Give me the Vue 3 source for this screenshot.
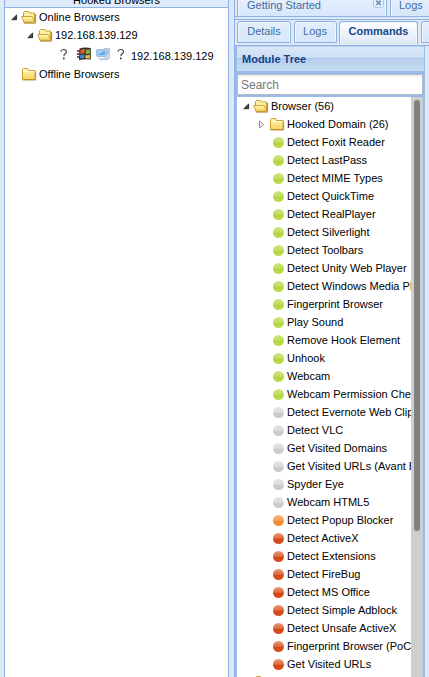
<script setup>
const modules = [
  ['green', ['Detect Foxit Reader', 'Detect LastPass', 'Detect MIME Types', 'Detect QuickTime', 'Detect RealPlayer', 'Detect Silverlight', 'Detect Toolbars', 'Detect Unity Web Player', 'Detect Windows Media Player', 'Fingerprint Browser', 'Play Sound', 'Remove Hook Element', 'Unhook', 'Webcam', 'Webcam Permission Check']],
  ['grey', ['Detect Evernote Web Clipper', 'Detect VLC', 'Get Visited Domains', 'Get Visited URLs (Avant Browser)', 'Spyder Eye', 'Webcam HTML5']],
  ['orange', ['Detect Popup Blocker']],
  ['red', ['Detect ActiveX', 'Detect Extensions', 'Detect FireBug', 'Detect MS Office', 'Detect Simple Adblock', 'Detect Unsafe ActiveX', 'Fingerprint Browser (PoC)', 'Get Visited URLs']],
].flatMap(([color, names]) => names.map((name) => ({ color, name })))
</script>

<template>
  <svg class="defs" width="0" height="0">
    <defs>
      <linearGradient id="gold" x1="0" y1="0" x2="0" y2="1">
        <stop offset="0" stop-color="#fffab8" />
        <stop offset="1" stop-color="#f5d25c" />
      </linearGradient>
      <symbol id="open" viewBox="0 0 16 14">
        <path d="M2.5 12V2.5L3.5 1.5H7.5L8.5 3H13.5V12Z" fill="#fdf0a0" stroke="#c9a234" />
        <path d="M14.6 4V12.5" fill="none" stroke="#a87a1c" stroke-width=".9" />
        <path d="M.8 6.5H11.3L13.8 12.3H3Z" fill="url(#gold)" stroke="#c99c30" stroke-width=".9" />
        <path d="M3 13.2H14.8" fill="none" stroke="#a87a1c" stroke-width=".8" />
      </symbol>
      <symbol id="closed" viewBox="0 0 16 14">
        <path d="M1.5 12.5V2.5L2.5 1.5H6.5L7.5 3.5H14V12.5Z" fill="url(#gold)" stroke="#c99f30" />
        <path d="M2.5 4.5H13.3" stroke="#fffbd5" />
        <path d="M2 13H14.7V4.5" fill="none" stroke="#ad8025" stroke-width=".8" />
      </symbol>
      <symbol id="expanded" viewBox="0 0 7 7">
        <path d="M.8 5.7L5.6 1V5.7Z" fill="#444" stroke="#222" stroke-width=".9" />
      </symbol>
      <symbol id="question" viewBox="0 0 9 14">
        <path d="M1.3 4V3Q1.7 1.3 4.2 1.3Q7.3 1.3 7.3 4Q7.3 5.3 5.5 6.5Q4.4 7.3 4.4 9" fill="none" stroke="#444" stroke-width="1.25" />
        <circle cx="4.3" cy="11.5" r="1" fill="#333" />
      </symbol>
    </defs>
  </svg>
  <div class="page">
    <section class="hooked">
      <header class="hooked-head"><span>Hooked Browsers</span></header>
      <div class="row online"><svg class="arrow"><use href="#expanded" /></svg><svg class="folder"><use href="#open" /></svg><span>Online Browsers</span></div>
      <div class="row host"><svg class="arrow"><use href="#expanded" /></svg><svg class="folder"><use href="#open" /></svg><span>192.168.139.129</span></div>
      <div class="row client">
        <svg class="question"><use href="#question" /></svg>
        <svg class="windows" viewBox="0 0 14 14">
          <path d="M0 3H3V5H0ZM0 6H3V8H0ZM0 9H3V11H0Z" fill="#8a5a4c" />
          <path d="M2.5 1.5Q7 -.2 13.8 1V12.6Q8 11.6 2 13.2Z" fill="#33302c" />
          <path d="M3.6 2.7Q6 1.6 8 2.2L7.5 6.5Q5.5 6 3.3 7Z" fill="#e65b29" />
          <path d="M9 2.4Q11 2.8 12.9 2.2V6.6Q10.5 7.3 8.6 6.7Z" fill="#78b43c" />
          <path d="M3.2 8Q5.5 7 7.5 7.6L7 11.2Q5.2 10.8 3 11.8Z" fill="#408bd0" />
          <path d="M8.6 7.9Q10.6 8.4 12.8 7.8V11.4Q10 11.8 8.2 11.1Z" fill="#f1c43b" />
        </svg>
        <svg class="computer" viewBox="0 0 14 14">
          <path d="M8.5 1.5H13.5V11.5H9Z" fill="#d4e0e9" stroke="#b3c6d6" />
          <path d="M10 4H13M10 6H13" stroke="#8fabc2" />
          <rect x=".5" y="2.5" width="10" height="7" rx="1" fill="#a9cdf0" stroke="#9dbbda" />
          <path d="M2 4H9V8H2Z" fill="#68aaec" />
          <path d="M2 4H8L3 7H2Z" fill="#a4d0fa" />
          <path d="M2.5 11.5H10L12 13H4Z" fill="#cedce8" stroke="#b0c2d1" stroke-width=".7" />
        </svg>
        <svg class="question second"><use href="#question" /></svg>
        <span>192.168.139.129</span>
      </div>
      <div class="row offline"><svg class="folder"><use href="#closed" /></svg><span>Offline Browsers</span></div>
    </section>

    <section class="main">
      <nav class="outer-tabs">
        <div class="tab started"><span>Getting Started</span><svg class="close" viewBox="0 0 11 11"><rect x=".5" y=".5" width="10" height="9" rx="2" fill="#e6effb" stroke="#a9c4e8" /><path d="M3.3 2.7L7.7 7M7.7 2.7L3.3 7" stroke="#6b8db9" stroke-width="1.7" /></svg></div>
        <div class="tab outer-logs">Logs</div>
      </nav>
      <nav class="inner-tabs">
        <div class="tab details">Details</div>
        <div class="tab logs">Logs</div>
        <div class="tab active">Commands</div>
        <div class="tab next"></div>
      </nav>
      <div class="body">
        <div class="modules">
          <header class="module-head">Module Tree</header>
          <div class="search"><input type="text" placeholder="Search" /></div>
          <div class="tree">
            <div class="list">
              <div class="row root"><svg class="arrow"><use href="#expanded" /></svg><svg class="folder"><use href="#open" /></svg><span>Browser (56)</span></div>
              <div class="row domain"><svg class="collapsed" viewBox="0 0 7 9"><path d="M1.5 1L5.5 4.5L1.5 8Z" fill="#fff" stroke="#8b8b8b" /></svg><svg class="folder"><use href="#closed" /></svg><span>Hooked Domain (26)</span></div>
              <div v-for="m in modules" :key="m.color + m.name" class="row module"><i class="dot" :class="m.color"></i><span>{{ m.name }}</span></div>
              <div class="row root chrome"><svg class="folder"><use href="#closed" /></svg></div>
            </div>
            <div class="scroll"><div class="thumb"></div></div>
          </div>
        </div>
        <div class="gutter"></div>
      </div>
    </section>
  </div>
</template>

<style>
body { margin: 0; overflow: hidden; }
</style>

<style scoped>
* { box-sizing: border-box; }
.defs { display: block; }
svg { display: block; flex: none; }
.page {
  display: flex;
  width: 429px;
  height: 677px;
  overflow: hidden;
  padding-left: 4px;
  background: #dfe8f6;
  font: 11px/14px "Liberation Sans", Arial, sans-serif;
  color: #000;
}
.hooked {
  flex: none;
  width: 225px;
  background: #fff;
  border: solid #8db2e3;
  border-width: 0 1px;
}
.hooked-head {
  height: 8px;
  display: flex;
  align-items: flex-end;
  justify-content: center;
  overflow: hidden;
  border-bottom: 1px solid #8db2e3;
  background: #dfeafa;
}
.row { display: flex; align-items: center; height: 18px; white-space: nowrap; }
.folder { width: 16px; height: 14px; }
.arrow { width: 7px; height: 7px; margin-right: 4px; }
.online { padding-left: 6px; }
.online .folder, .host .folder { margin: 0 2px 0 -1px; }
.host { padding-left: 22px; }
.offline { padding-left: 16px; }
.offline span { margin-left: 2px; }
.client { height: 21px; padding-left: 55px; }
.client span { margin: 3px 0 0 6px; }
.question { width: 8px; height: 13px; margin-bottom: 1px; }
.windows { width: 14px; height: 14px; margin: 0 0 1px 9px; }
.computer { width: 14px; height: 14px; margin: 0 0 1px 5px; }
.second { margin-left: 7px; }

.main {
  flex: none;
  width: 196px;
  margin-left: 5px;
  border-left: 1px solid #8db2e3;
  display: flex;
  flex-direction: column;
  overflow: hidden;
}
.outer-tabs { display: flex; gap: 3px; height: 17px; padding-left: 2px; border-bottom: 1px solid #8db2e3; }
.tab {
  flex: none;
  color: #416da3;
  background: linear-gradient(#e4eefb, #d7e6fa);
  border: 1px solid #8db2e3;
  border-bottom: 0;
  box-shadow: inset 1px 1px #f1f6fd, inset -1px 0 #f1f6fd;
}
.outer-tabs .tab { height: 16px; border-top: 0; line-height: 11px; box-shadow: inset 1px 0 #f1f6fd, inset -1px 0 #f1f6fd; }
.started { width: 150px; padding-left: 9px; display: flex; }
.close { width: 11px; height: 11px; margin: -2px 2px 0 auto; }
.outer-logs { width: 60px; padding-left: 8px; }
.inner-tabs {
  display: flex;
  gap: 3px;
  height: 27px;
  margin-top: 2px;
  padding: 1px 0 2px 2px;
  border-top: 1px solid #8db2e3;
  border-bottom: 1px solid #8db2e3;
}
.inner-tabs .tab { height: 22px; border-radius: 3px 3px 0 0; line-height: 18px; text-align: center; border-bottom: 1px solid #8db2e3; }
.details { width: 54px; }
.logs { width: 43px; padding-right: 1px; }
.inner-tabs .active { width: 79px; height: 23px; font-weight: bold; color: #15498b; background: linear-gradient(#fff, #dfe8f6); border-bottom: 0; margin-left: -1px; }
.next { width: 40px; }
.body { display: flex; height: 631px; }
.modules { width: 190px; border: solid #99bbe8; border-width: 0 1px; flex: none; background: #99bbe8; }
.gutter { flex: 1; background: #dfe8f6; }
.module-head {
  height: 26px;
  padding-left: 5px;
  border: 1px solid #99bbe8;
  border-top-color: #b9d0f0;
  border-width: 1px 0 1px 1px;
  font-weight: bold;
  line-height: 24px;
  color: #15428b;
  background: linear-gradient(#dae7f6 0, #cddef3 45%, #abc7ec 46%, #abc7ec 48%, #b8cfee 50%, #c6daf3 100%);
}
.search { height: 25px; padding: 2px 2px 2px 1px; background: #99bbe8; }
.search input {
  display: block;
  width: 186px;
  height: 21px;
  margin: 0;
  padding: 0 3px;
  border: 1px solid #b5b8c8;
  outline: 0;
  background: linear-gradient(#eee, #fff 3px);
  font: 12px "Liberation Sans", Arial, sans-serif;
}
.search input::placeholder { color: #777; opacity: 1; }
.tree { display: flex; width: 186px; height: 580px; margin-left: 1px; background: #fff; overflow: hidden; }
.list { width: 174px; overflow: hidden; flex: none; }
.root { padding-left: 6px; }
.root .folder { margin-right: 2px; margin-left: -1px; }
.domain { padding-left: 21px; }
.collapsed { width: 7px; height: 9px; margin-right: 4px; }
.domain .folder { margin-right: 2px; }
.module { padding-left: 36px; }
.chrome .folder { margin-left: 11px; }
.dot { flex: none; width: 11px; height: 11px; border-radius: 50%; margin-right: 3px; }
.green { background: linear-gradient(#cde588, #c1df5c 48%, #b3d53f 56%, #bcdc50); }
.grey { background: linear-gradient(#e4e4e4, #dcdcdc 48%, #cacaca 58%, #c9c9c9); }
.orange { background: linear-gradient(#f9b678, #f8a050 48%, #f38a30 56%, #f39139); }
.red { background: linear-gradient(#e99576, #df6c42 48%, #d54515 56%, #d84e20); }
.scroll { width: 12px; padding: 3px 3px 0; background: #cecece; }
.thumb { width: 6px; height: 431px; border-radius: 3px; background: #7f8282; }
</style>
